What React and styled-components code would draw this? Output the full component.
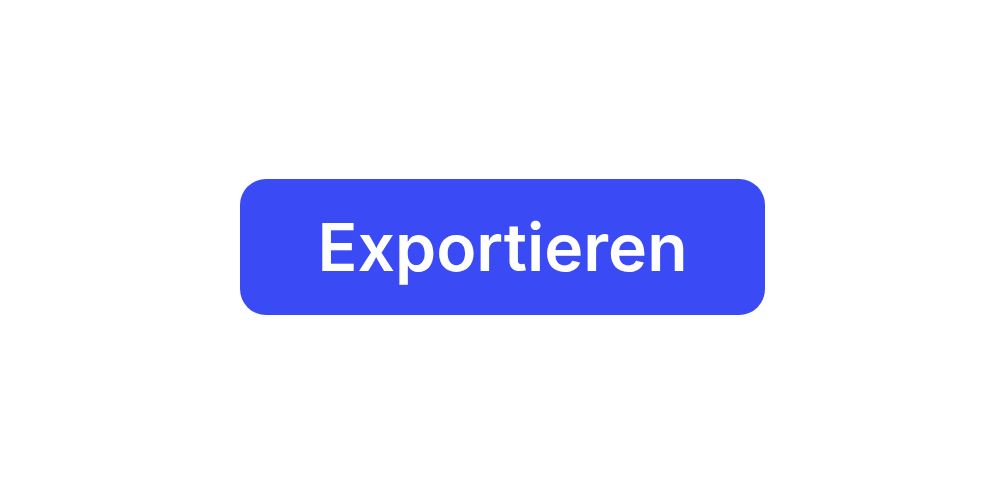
import styled, { createGlobalStyle } from "styled-components";

const GlobalStyle = createGlobalStyle`
	html, body {
		margin: 0;
		padding: 0;
		background: #ffffff;
	}
`;

export default function App() {
	return (
		<>
			<GlobalStyle />
			<Stage>
				<ExportButton type="button">Exportieren</ExportButton>
			</Stage>
		</>
	);
}

const Stage = styled.div`
	width: 1000px;
	height: 500px;
	display: flex;
	justify-content: center;
	align-items: center;
	padding-left: 5px;
	padding-bottom: 6px;
	box-sizing: border-box;
`;

const ExportButton = styled.button`
	width: 525px;
	height: 136px;
	border: none;
	border-radius: 26px;
	background: #3a4af4;
	color: #ffffff;
	font-family: "Inter", "Liberation Sans", sans-serif;
	font-size: 66px;
	font-weight: 600;
	letter-spacing: 0;
	cursor: pointer;
	display: flex;
	justify-content: center;
	align-items: center;
	padding: 0;
`;
